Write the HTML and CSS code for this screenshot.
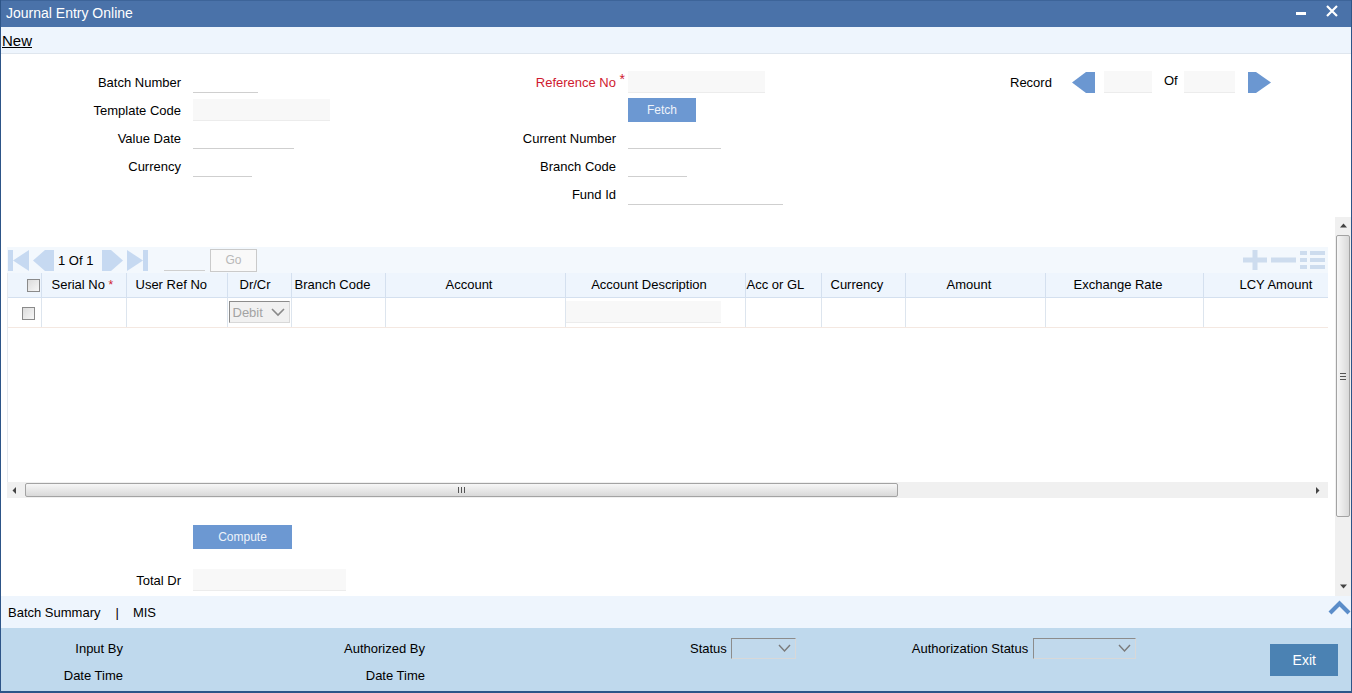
FILE: index.html
```html
<!DOCTYPE html>
<html>
<head>
<meta charset="utf-8">
<title>Journal Entry Online</title>
<link rel="stylesheet" href="styles.css">
</head>
<body>
<div class="window">
  <div class="titlebar">
    <span class="title">Journal Entry Online</span>
    <div class="winbtns">
      <svg class="min" width="10" height="3" viewBox="0 0 10 3"><rect width="10" height="3" fill="#fff"/></svg>
      <svg class="close" width="12" height="12" viewBox="0 0 12 12"><path d="M1 1L11 11M11 1L1 11" stroke="#fff" stroke-width="2.2"/></svg>
    </div>
  </div>

  <div class="toolbar"><a class="new">New</a></div>

  <div class="header">
    <div class="fcol fcol-left">
      <label class="lbl">Batch Number</label><div class="fld"><span class="inp line w65"></span></div>
      <label class="lbl">Template Code</label><div class="fld"><span class="inp ro w137"></span></div>
      <label class="lbl">Value Date</label><div class="fld"><span class="inp line w101"></span></div>
      <label class="lbl">Currency</label><div class="fld"><span class="inp line w59"></span></div>
    </div>
    <div class="fcol fcol-mid">
      <label class="lbl req">Reference No<span class="star">*</span></label><div class="fld"><span class="inp ro w137"></span></div>
      <span></span><div class="fld"><button class="btn fetch">Fetch</button></div>
      <label class="lbl">Current Number</label><div class="fld"><span class="inp line w93"></span></div>
      <label class="lbl">Branch Code</label><div class="fld"><span class="inp line w59"></span></div>
      <label class="lbl">Fund Id</label><div class="fld"><span class="inp line w155"></span></div>
    </div>
    <div class="fcol-right">
      <span class="rec-lbl">Record</span>
      <svg class="rec-prev" width="23" height="21" viewBox="0 0 23 21"><polygon points="0,10.5 14,0 23,0 23,21 14,21" fill="#6b97d1"/></svg>
      <span class="inp ro w48"></span>
      <span class="of-lbl">Of</span>
      <span class="inp ro w51"></span>
      <svg class="rec-next" width="23" height="21" viewBox="0 0 23 21"><polygon points="0,0 8,0 23,10.5 8,21 0,21" fill="#6b97d1"/></svg>
    </div>
  </div>

  <div class="mainrow">
    <div class="content">
      <div class="grid">
        <div class="gridbar">
          <svg class="nav first" width="21" height="21" viewBox="0 0 21 21"><rect x="0" y="0" width="5" height="21" fill="#c6d9f1"/><polygon points="5,10.5 21,0 21,21" fill="#c6d9f1"/></svg>
          <svg class="nav prev" width="21" height="21" viewBox="0 0 21 21"><polygon points="0,10.5 12,0 21,0 21,21 12,21" fill="#c6d9f1"/></svg>
          <span class="pg">1 Of 1</span>
          <svg class="nav next" width="21" height="21" viewBox="0 0 21 21"><polygon points="0,0 9,0 21,10.5 9,21 0,21" fill="#c6d9f1"/></svg>
          <svg class="nav last" width="21" height="21" viewBox="0 0 21 21"><polygon points="0,0 16,10.5 0,21" fill="#c6d9f1"/><rect x="16" y="0" width="5" height="21" fill="#c6d9f1"/></svg>
          <span class="inp line w41 goinp"></span>
          <button class="gobtn">Go</button>
          <div class="gridtools">
            <svg width="24" height="20" viewBox="0 0 24 20"><rect x="0" y="7.5" width="24" height="5" fill="#cddcee"/><rect x="9.5" y="0" width="5" height="20" fill="#cddcee"/></svg>
            <svg width="25" height="20" viewBox="0 0 25 20"><rect x="0" y="7.5" width="25" height="5" fill="#cddcee"/></svg>
            <svg width="25" height="20" viewBox="0 0 25 20"><rect x="0" y="1" width="7" height="4" fill="#cddcee"/><rect x="10" y="1" width="15" height="4" fill="#cddcee"/><rect x="0" y="8" width="7" height="4" fill="#cddcee"/><rect x="10" y="8" width="15" height="4" fill="#cddcee"/><rect x="0" y="15" width="7" height="4" fill="#cddcee"/><rect x="10" y="15" width="15" height="4" fill="#cddcee"/></svg>
          </div>
        </div>
        <div class="gridbody">
          <table class="tbl">
            <colgroup>
              <col class="k-chk"><col class="k-serial"><col class="k-uref"><col class="k-drcr"><col class="k-branch"><col class="k-acc"><col class="k-accdesc"><col class="k-accgl"><col class="k-ccy"><col class="k-amt"><col class="k-xr"><col class="k-lcy">
            </colgroup>
            <thead>
              <tr>
                <th class="h-chk"><span class="chk"></span></th>
                <th class="h-serial">Serial No <span class="rstar">*</span></th>
                <th class="h-uref">User Ref No</th>
                <th class="h-drcr">Dr/Cr</th>
                <th class="h-branch">Branch Code</th>
                <th class="h-center">Account</th>
                <th class="h-center">Account Description</th>
                <th class="h-accgl">Acc or GL</th>
                <th class="h-ccy">Currency</th>
                <th class="h-center">Amount</th>
                <th class="h-center">Exchange Rate</th>
                <th class="h-lcy">LCY Amount</th>
              </tr>
            </thead>
            <tbody>
              <tr>
                <td class="d-chk"><span class="chk"></span></td>
                <td></td>
                <td></td>
                <td class="d-drcr"><span class="sel dis"><span class="seltxt">Debit</span><svg width="14" height="9" viewBox="0 0 14 9"><path d="M1 1L7 7L13 1" fill="none" stroke="#8a8a8a" stroke-width="1.6"/></svg></span></td>
                <td></td>
                <td></td>
                <td class="d-accdesc"><span class="inp ro w155"></span></td>
                <td></td>
                <td></td>
                <td></td>
                <td></td>
                <td></td>
              </tr>
            </tbody>
          </table>
        </div>
        <div class="hscroll">
          <svg class="harr" width="6" height="7" viewBox="0 0 6 7"><polygon points="4,0 4,7 0.5,3.5" fill="#444"/></svg>
          <div class="hthumb"><span class="grip-v"><i></i><i></i><i></i></span></div>
          <svg class="harr harr-r" width="6" height="7" viewBox="0 0 6 7"><polygon points="1,0 1,7 4.5,3.5" fill="#444"/></svg>
        </div>
      </div>

      <div class="lower">
        <div class="lrow"><span class="lbl"></span><button class="btn compute">Compute</button></div>
        <div class="lrow total"><label class="lbl">Total Dr</label><span class="inp ro w153"></span></div>
      </div>
    </div>
    <div class="vscroll">
      <svg class="varr" width="7" height="5" viewBox="0 0 7 5"><polygon points="0,4.5 7,4.5 3.5,0.5" fill="#444"/></svg>
      <div class="vthumb"><span class="grip-h"><i></i><i></i><i></i></span></div>
      <svg class="varr varr-d" width="7" height="5" viewBox="0 0 7 5"><polygon points="0,0.5 7,0.5 3.5,4.5" fill="#444"/></svg>
    </div>
  </div>

  <div class="tabbar">
    <span class="tab">Batch Summary</span><span class="sep">|</span><span class="tab">MIS</span>
    <svg class="chev" width="23" height="15" viewBox="0 0 23 15"><path d="M2 13L11.5 3.5L21 13" fill="none" stroke="#5b8dc9" stroke-width="4.2"/></svg>
  </div>

  <div class="footer">
    <div class="fgrp g1"><span>Input By</span><span>Date Time</span></div>
    <div class="fgrp g2"><span>Authorized By</span><span>Date Time</span></div>
    <div class="fsel s1"><span>Status</span><span class="sel fsel-box w65b"><svg width="13" height="9" viewBox="0 0 13 9"><path d="M1 1L6.5 7L12 1" fill="none" stroke="#7a7a7a" stroke-width="1.4"/></svg></span></div>
    <div class="fsel s2"><span>Authorization Status</span><span class="sel fsel-box w103"><svg width="13" height="9" viewBox="0 0 13 9"><path d="M1 1L6.5 7L12 1" fill="none" stroke="#7a7a7a" stroke-width="1.4"/></svg></span></div>
    <button class="exit">Exit</button>
  </div>
</div>
</body>
</html>
```

FILE: styles.css
```css
* { box-sizing: border-box; }
html, body { margin: 0; padding: 0; }
body {
  font-family: "Liberation Sans", Arial, sans-serif;
  font-size: 13px;
  color: #000;
  background: #fff;
}
.window {
  width: 1352px;
  height: 693px;
  border-left: 1px solid #2d5588;
  border-right: 1px solid #2d5588;
  border-bottom: 2px solid #2d5588;
  display: flex;
  flex-direction: column;
  overflow: hidden;
}

/* title */
.titlebar {
  height: 27px;
  flex: none;
  background: #4a72a9;
  border-top: 1px solid #3d6499;
  display: flex;
  justify-content: space-between;
  color: #fff;
  font-size: 14px;
}
.title { padding-left: 5px; line-height: 25px; }
.winbtns { display: flex; align-items: flex-start; padding-right: 13px; }
.winbtns .min { margin-top: 11px; margin-right: 20px; }
.winbtns .close { margin-top: 4px; }

/* toolbar */
.toolbar {
  height: 27px;
  flex: none;
  background: #eef5fd;
  border-bottom: 1px solid #dfe6ee;
  display: flex;
  align-items: center;
  padding-left: 1px;
}
.new { font-size: 15px; text-decoration: underline; color: #000; }

/* header form */
.header {
  height: 163px;
  flex: none;
  display: flex;
  padding-top: 14px;
}
.fcol {
  display: grid;
  grid-auto-rows: 28px;
  column-gap: 12px;
  align-items: center;
  align-content: start;
}
.fcol-left { width: 400px; grid-template-columns: 180px 1fr; }
.fcol-mid { width: 609px; grid-template-columns: 215px 1fr; }
.lbl { text-align: right; white-space: nowrap; }
.fld { display: flex; align-items: center; }
.req { color: #cf1a2f; position: relative; }
.star { position: absolute; right: -9px; top: -4px; font-size: 14px; }

.inp { display: block; height: 22px; flex: none; }
.line { border-bottom: 1px solid #cfcfcf; background: #fff; }
.ro { background: #f8f8f8; border-bottom: 1px solid #ececec; }
.w41 { width: 41px; }
.w48 { width: 48px; }
.w51 { width: 51px; }
.w59 { width: 59px; }
.w65 { width: 65px; }
.w93 { width: 93px; }
.w101 { width: 101px; }
.w137 { width: 137px; }
.w153 { width: 153px; }
.w155 { width: 155px; }

.btn {
  border: none;
  background: #6c98d2;
  color: #eef3fa;
  font-family: "Liberation Sans", Arial, sans-serif;
  font-size: 12px;
  height: 24px;
  padding: 0;
}
.fetch { width: 68px; }
.compute { width: 99px; }

.fcol-right {
  display: flex;
  align-items: center;
  height: 28px;
}
.rec-lbl { width: 41px; margin-right: 21px; }
.rec-prev { margin-right: 9px; }
.of-lbl { margin: 0 6px 0 12px; position: relative; top: -2px; }
.rec-next { margin-left: 13px; }

/* main area */
.mainrow {
  height: 379px;
  flex: none;
  display: flex;
}
.content { flex: 1; overflow: hidden; padding-top: 30px; }

.grid { width: 1321px; margin-left: 6px; }
.gridbar {
  height: 26px;
  background: #f3f8fd;
  display: flex;
  align-items: center;
  padding-left: 1px;
}
.nav { flex: none; }
.first { margin-right: 4px; }
.prev { margin-right: 4px; }
.pg { width: 38px; margin-right: 6px; }
.next { margin-right: 4px; }
.goinp { margin-left: 16px; height: 21px; background: transparent; }
.gobtn {
  margin-left: 5px;
  width: 47px;
  height: 23px;
  border: 1px solid #cacaca;
  background: #f9f9f9;
  color: #b8b8b8;
  font-family: "Liberation Sans", Arial, sans-serif;
  font-size: 12px;
  padding: 0;
}
.gridtools {
  margin-left: auto;
  display: flex;
  gap: 4px;
  padding-right: 3px;
}

.gridbody {
  height: 209px;
  border-left: 1px solid #e5e9ee;
  background: #fff;
}
.tbl {
  table-layout: fixed;
  border-collapse: collapse;
  width: 1320px;
}
.k-chk { width: 33px; }
.k-serial { width: 85px; }
.k-uref { width: 101px; }
.k-drcr { width: 64px; }
.k-branch { width: 94px; }
.k-acc { width: 180px; }
.k-accdesc { width: 180px; }
.k-accgl { width: 76px; }
.k-ccy { width: 84px; }
.k-amt { width: 140px; }
.k-xr { width: 158px; }
.k-lcy { width: 125px; }

.tbl th {
  height: 24px;
  padding: 0;
  background: #eef5fd;
  border-right: 1px solid #d4e0ef;
  border-bottom: 1px solid #d4e0ef;
  font-weight: normal;
  text-align: left;
  white-space: nowrap;
  overflow: hidden;
}
.tbl th:last-child { border-right: none; }
.h-chk { text-align: right !important; padding-right: 1px !important; }
.h-serial { padding-left: 10px !important; }
.rstar { color: #cf1a2f; font-size: 12px; }
.h-uref { padding-left: 9px !important; }
.h-drcr { padding-left: 12px !important; }
.h-branch { padding-left: 3px !important; }
.h-center { text-align: center !important; padding-right: 12px !important; }
.h-accgl { padding-left: 1px !important; }
.h-ccy { padding-left: 9px !important; }
.h-lcy { padding-left: 36px !important; }

.tbl td {
  height: 30px;
  padding: 0;
  border-right: 1px solid #dde5ee;
  border-bottom: 1px solid #f4e8e1;
}
.tbl td:last-child { border-right: none; }
.d-chk { padding-left: 14px !important; }
.d-drcr { padding-left: 1px !important; }
.d-accdesc { padding-left: 0 !important; }

.chk {
  display: inline-block;
  width: 13px;
  height: 13px;
  border: 1px solid #8a8a8a;
  background: linear-gradient(135deg, #dcdcdc, #f7f7f7);
  vertical-align: middle;
}

.sel {
  display: inline-flex;
  align-items: center;
  justify-content: space-between;
  border-top: 1px solid #8c8c8c;
  border-left: 1px solid #8c8c8c;
  border-right: 1px solid #d8d8d8;
  border-bottom: 1px solid #d8d8d8;
  vertical-align: middle;
}
.dis {
  width: 61px;
  height: 22px;
  background: #f1f1f1;
  padding: 0 4px 0 3px;
}
.seltxt { color: #a3a3a3; }

.hscroll {
  height: 16px;
  background: #f0f0f0;
  display: flex;
  align-items: center;
}
.harr { margin-left: 5px; flex: none; }
.hthumb {
  margin-left: 7px;
  width: 873px;
  height: 14px;
  border: 1px solid #a3a3a3;
  border-radius: 2px;
  background: linear-gradient(#f7f7f7, #d9d9d9);
  display: flex;
  align-items: center;
  justify-content: center;
}
.grip-v { display: flex; gap: 2px; }
.grip-v i { display: block; width: 1px; height: 6px; background: #555; }
.harr-r { margin-left: auto; margin-right: 7px; }

.lower { padding-top: 27px; }
.lrow {
  display: grid;
  grid-template-columns: 180px 1fr;
  column-gap: 12px;
  align-items: center;
}
.total { margin-top: 20px; }

.vscroll {
  width: 16px;
  flex: none;
  background: #f0f0f0;
  display: flex;
  flex-direction: column;
  align-items: center;
}
.varr { margin-top: 6px; flex: none; }
.vthumb {
  margin-top: 7px;
  width: 14px;
  height: 282px;
  border: 1px solid #a3a3a3;
  border-radius: 2px;
  background: linear-gradient(90deg, #f7f7f7, #d9d9d9);
  display: flex;
  align-items: center;
  justify-content: center;
  flex: none;
}
.grip-h { display: flex; flex-direction: column; gap: 2px; }
.grip-h i { display: block; width: 6px; height: 1px; background: #555; }
.varr-d { margin-top: auto; margin-bottom: 7px; }

/* tabs */
.tabbar {
  height: 32px;
  flex: none;
  background: #eef5fd;
  display: flex;
  align-items: center;
  padding-left: 7px;
}
.sep { margin: 0 14px 0 15px; }
.chev { margin-left: auto; margin-top: -10px; }

/* footer */
.footer {
  flex: 1;
  background: #bfd9ed;
  display: flex;
  align-items: flex-start;
  padding-top: 7px;
}
.fgrp {
  display: grid;
  grid-auto-rows: 27px;
  align-items: center;
  text-align: right;
}
.g1 { width: 122px; }
.g2 { width: 302px; }
.fsel {
  display: flex;
  align-items: center;
  height: 27px;
}
.s1 { margin-left: 265px; }
.s2 { margin-left: 116px; }
.fsel-box {
  height: 21px;
  margin-left: 4px;
  justify-content: flex-end;
  padding-right: 4px;
  background: #c1d9ec;
}
.s2 .fsel-box { margin-left: 5px; }
.w65b { width: 65px; }
.w103 { width: 103px; }
.exit {
  margin-left: 134px;
  margin-top: 9px;
  width: 68px;
  height: 32px;
  border: none;
  background: #4b82b3;
  color: #fff;
  font-family: "Liberation Sans", Arial, sans-serif;
  font-size: 14px;
  padding: 0;
}
```
